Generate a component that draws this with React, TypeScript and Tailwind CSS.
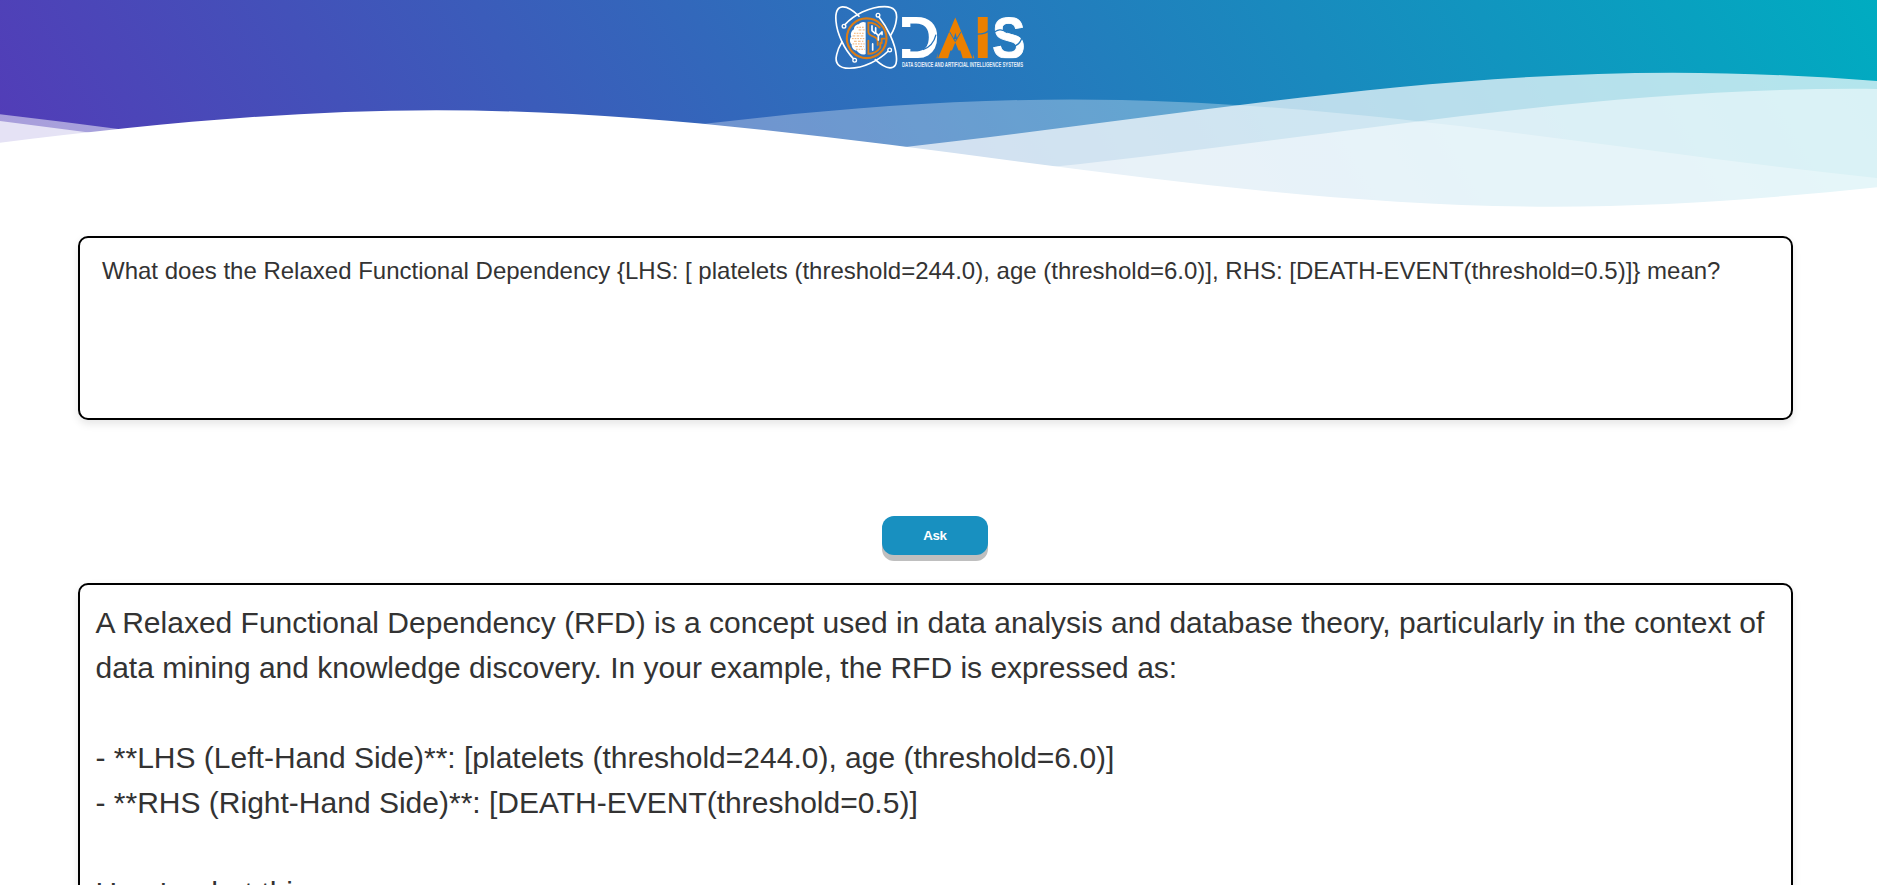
const WAVE = "M-160 44c30 0 58-18 88-18s 58 18 88 18 58-18 88-18 58 18 88 18 v44h-352z";

const waves = [
  { x: 27.9, y: 0, fill: "rgba(255,255,255,0.7)" },
  { x: 42.2, y: 3, fill: "rgba(255,255,255,0.5)" },
  { x: -19.5, y: 5, fill: "rgba(255,255,255,0.3)" },
  { x: 106.4, y: 7, fill: "#ffffff" },
];

function Emblem() {
  return (
    <g transform="translate(2 2) scale(0.33333)" strokeLinecap="round" strokeLinejoin="round">
      <g stroke="#fff" strokeWidth="5">
        <path d="M39 66C65 38 112 12 158 12C186 12 197 26 193 52C191 68 185 84 176 98" />
        <path d="M168 146C142 172 96 197 52 197C18 197 8 180 14 156C17 142 22 131 30 118" />
        <path d="M81 41C64 24 46 12 31 13C13 15 10 34 12 56C15 94 38 142 64 168" />
        <path d="M141 43C166 74 190 122 193 160C196 186 188 196 174 196C160 195 145 185 130 171" />
      </g>
      <g stroke="#fff" strokeWidth="4">
        <circle cx="36" cy="71" r="5.500" />
        <circle cx="138" cy="38" r="5.500" />
        <circle cx="173" cy="142" r="5.500" />
        <circle cx="68" cy="173" r="5.500" />
      </g>
      <circle cx="104" cy="107" r="59.500" stroke="#dc7d16" strokeWidth="6.500" />
      <path d="M101 60C93 56 84 60 81 65C72 65 66 72 66 80C57 85 55 95 58 102C52 109 53 120 59 126C58 136 66 144 74 144C79 153 92 159 101 154Z" fill="#fff" />
      <g stroke="#f3b071" strokeWidth="3" strokeLinecap="butt">
        <path d="M74 74h24M66 92h32M60 108h38M62 124h36M72 140h26" strokeDasharray="5 3" />
        <path d="M80 82h18M62 100h34M66 116h28M70 132h26" strokeDasharray="8 4" />
      </g>
      <g stroke="#dc7d16" strokeWidth="5.500">
        <path d="M109 60v28c0 7 8 11 16 14s12 8 12 15v10M109 60c14 0 26 6 34 15" />
        <path d="M109 114v40c13 0 27-7 36-19v-14M158 108h-9v14" />
      </g>
      <g stroke="#fff" strokeWidth="5">
        <path d="M120 70v14l9 8M131 76v12M139 112v-13l10-10M150 88v8M122 124v18M137 97l-5-6" />
      </g>
    </g>
  );
}

function Logo() {
  return (
    <svg className="mt-[4px] mr-[17px] h-[68px] w-[200px] shrink-0 font-['Liberation_Sans',Arial,sans-serif]" viewBox="0 3.4 200 68" fill="none">
      <mask id="cuts" maskUnits="userSpaceOnUse" x="0" y="0" width="200" height="80">
        <rect width="200" height="57.600" fill="#fff" />
        <path d="M70 26.500h14.500v22H70zM125.300 42l7.800 19h-15.600z" fill="#000" />
        <path d="M107.500 12h17.800v5l-17.800 42zM143 12h-17.700v5l17.700 42z" fill="#000" />
        <path d="M142 12h12c-5 0-9 3-11 9z" fill="#000" />
        <g stroke="#000" strokeWidth="1.3">
          <path d="M93 49c6-2 11-7 13-15" />
          <path d="M147 33.500c6 0 10-1 12-4" />
          <path d="M163 34c3-6 10-6 14-2M182 46c6-1 9-4 10-10" />
        </g>
      </mask>
      <Emblem />
      <g mask="url(#cuts)" fontWeight="700" fontSize="59">
        <text transform="translate(68.200 57.600) scale(0.97 1)" fill="#fff">D</text>
        <text transform="translate(107.500 57) scale(0.840 0.980)" fill="#ec8000" stroke="#ec8000" strokeWidth="5">A</text>
        <text transform="translate(143.200 57.600) scale(1.160 1)" fill="#ec8000">I</text>
        <text transform="translate(162.200 57) scale(0.840 0.960)" fill="#fff" stroke="#fff" strokeWidth="1">S</text>
      </g>
      <path d="M119.500 31l5.800 10 5.800-10" stroke="#2877bc" strokeWidth="1" />
      <text x="72" y="66.600" fontSize="7.400" fontWeight="700" fill="#e4edf7" textLength="121" lengthAdjust="spacingAndGlyphs">
        DATA SCIENCE AND ARTIFICIAL INTELLIGENCE SYSTEMS
      </text>
    </svg>
  );
}

export default function App() {
  return (
    <div className="flex h-[885px] flex-col overflow-hidden bg-white font-['Liberation_Sans',Arial,sans-serif] text-[#333]">
      <header className="flex h-[212px] shrink-0 flex-col items-center bg-[linear-gradient(60deg,#543ab7_0%,#00acc1_100%)]">
        <div className="flex h-[62px] shrink-0 justify-center"><Logo /></div>
        <svg className="h-[150px] w-full shrink-0" viewBox="0 24 148 28" preserveAspectRatio="none">
          {waves.map((w) => (
            <path key={w.y} d={WAVE} transform={`translate(${w.x} ${w.y})`} fill={w.fill} />
          ))}
        </svg>
      </header>
      <main className="flex flex-col items-center pr-[6px]">
        <textarea
          className="mt-6 h-[184px] w-[1715px] shrink-0 resize-none rounded-[10px] border-2 border-black bg-white px-[22px] py-[19px] text-2xl leading-[27px] shadow-[0_4px_8px_rgba(0,0,0,0.1)] outline-none"
          defaultValue="What does the Relaxed Functional Dependency {LHS: [ platelets (threshold=244.0), age (threshold=6.0)], RHS: [DEATH-EVENT(threshold=0.5)]} mean?"
        />
        <button className="mt-24 mr-[1px] h-[39px] w-[106px] shrink-0 rounded-xl bg-[#1890c0] text-[13.333px] font-bold tracking-[-0.4px] text-white shadow-[0_6px_0_#bfbfbf]">
          Ask
        </button>
        <section className="mt-7 h-[600px] w-[1715px] shrink-0 whitespace-pre-wrap rounded-[10px] border-2 border-black bg-white pt-[15px] pr-[14px] pl-[15.5px] text-3xl leading-[45px] shadow-[0_4px_8px_rgba(0,0,0,0.1)]">
          {`A Relaxed Functional Dependency (RFD) is a concept used in data analysis and database theory, particularly in the context of data mining and knowledge discovery. In your example, the RFD is expressed as:

- **LHS (Left-Hand Side)**: [platelets (threshold=244.0), age (threshold=6.0)]
- **RHS (Right-Hand Side)**: [DEATH-EVENT(threshold=0.5)]

Here's what this`}
        </section>
      </main>
    </div>
  );
}
